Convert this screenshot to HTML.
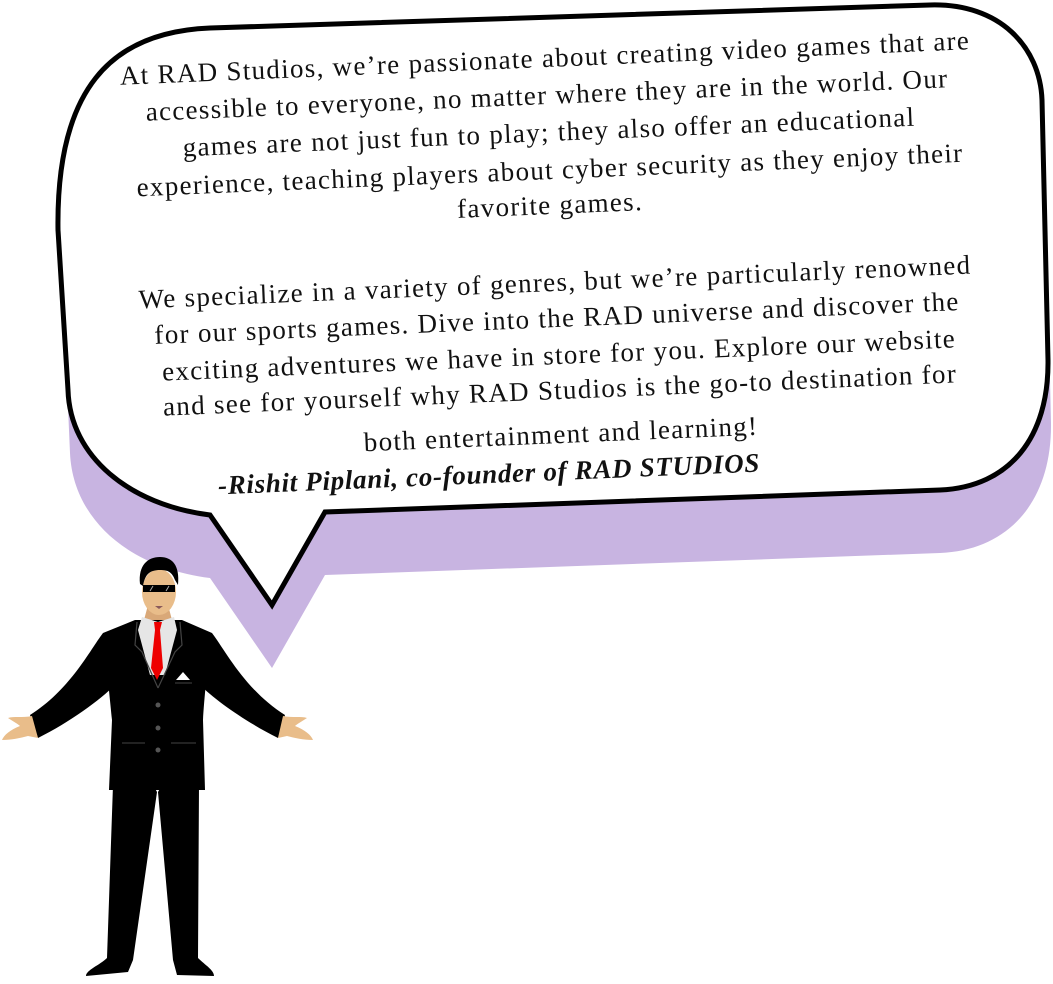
<!DOCTYPE html>
<html><head><meta charset="utf-8">
<style>
html,body{margin:0;padding:0;background:#fff;}
body{width:1053px;height:984px;position:relative;overflow:hidden;}
svg{position:absolute;left:0;top:0;}
.l{position:absolute;width:1000px;height:36px;line-height:36px;text-align:center;white-space:nowrap;
font-family:"Liberation Serif",serif;font-size:27px;color:#111;letter-spacing:1.3px;transform:rotate(-2.4deg);}
.s{font-weight:bold;font-style:italic;letter-spacing:0.7px;}
</style></head><body>
<svg width="1053" height="984" viewBox="0 0 1053 984">
  <path fill="#c8b4e1" d="M63 293 C60 150 110 95 210 91 L930 68 C1000 66 1043 110 1045 163 L1051 423 C1052 500 1010 550 940 553 L325 575 L272 668 L210 578 C130 568 73 520 70 453 Z"/>
  <path fill="#fff" stroke="#000" stroke-width="5" stroke-linejoin="miter" d="M58 230 C56 90 110 32 210 28 L930 5 C1000 3 1040 47 1042 100 L1048 360 C1049 437 1010 487 940 490 L325 512 L272 605 L210 515 C130 505 70 457 68 390 Z"/>
  <path fill="#000" d="M110 634 L103 633 C90 650 70 690 30 715 L38 738 C70 722 100 700 115 685 Z"/>
  <path fill="#000" d="M203 634 L212 633 C225 650 245 690 285 715 L278 738 C246 722 215 700 200 685 Z"/>
  <path fill="#e9bd8a" d="M32 716 C22 718 14 716 8 718 C14 722 18 724 20 726 C10 730 4 735 2 740 C12 740 20 738 28 736 L38 738 Z"/>
  <path fill="#e9bd8a" d="M283 716 C293 718 301 716 307 718 C301 722 297 724 295 726 C305 730 311 735 313 740 C303 740 295 738 287 736 L278 738 Z"/>
  <path fill="#000" d="M113 785 L153 785 L157 792 L133 960 L128 972 L86 976 C86 970 100 965 107 958 Z"/>
  <path fill="#000" d="M158 792 L162 785 L199 785 L198 958 C205 965 214 970 214 976 L177 975 L173 960 Z"/>
  <path fill="#000" d="M135 620 L182 620 L212 633 C208 660 204 700 203 720 L205 790 L109 790 L112 720 C110 700 106 660 103 633 Z"/>
  <path fill="#d9a878" d="M148 605 L168 605 L172 620 L144 620 Z"/>
  <path fill="#e6e6e6" d="M142 617 L158 622 L174 617 L177 630 L165 675 L150 675 L138 630 Z"/>
  <path fill="#e00" d="M154 622 L162 622 L160 630 L163 668 L157 680 L151 668 L155 630 Z"/>
  <path fill="none" stroke="#444" stroke-width="1.2" d="M137 622 L135 645 L142 652 L158 688 M180 622 L182 645 L175 652 L158 688"/>
  <path fill="#fff" d="M176 680 L183 672 L190 680 Z"/>
  <path stroke="#444" stroke-width="1" d="M175 683 L192 683 M122 743 L145 743 M171 743 L196 743"/>
  <circle cx="158" cy="705" r="2.5" fill="#555"/>
  <circle cx="158" cy="728" r="2.5" fill="#555"/>
  <circle cx="158" cy="750" r="2.5" fill="#555"/>
  <ellipse cx="159" cy="592" rx="17" ry="23" fill="#e9bd8a"/>
  <path fill="#000" d="M140 584 C138 565 148 557 160 557 C172 557 180 565 178 585 L175 580 C172 572 168 570 160 570 C150 570 145 574 143 586 Z"/>
  <rect x="143" y="585" width="32" height="7" fill="#000"/>
  <path stroke="#aaa" stroke-width="1" d="M150 591 L153 586 M166 591 L169 586"/>
  <path fill="#8a5a5a" d="M155 606 L163 606 L159 609 Z"/>
</svg>
<div class="l" style="left:45px;top:40px">At RAD Studios, we’re passionate about creating video games that are</div>
<div class="l" style="left:47px;top:77px">accessible to everyone, no matter where they are in the world. Our</div>
<div class="l" style="left:49px;top:114px">games are not just fun to play; they also offer an educational</div>
<div class="l" style="left:50px;top:152px">experience, teaching players about cyber security as they enjoy their</div>
<div class="l" style="left:50px;top:187px">favorite games.</div>
<div class="l" style="left:55px;top:264px">We specialize in a variety of genres, but we’re particularly renowned</div>
<div class="l" style="left:57px;top:300px">for our sports games. Dive into the RAD universe and discover the</div>
<div class="l" style="left:59px;top:337px">exciting adventures we have in store for you. Explore our website</div>
<div class="l" style="left:60px;top:372px">and see for yourself why RAD Studios is the go-to destination for</div>
<div class="l" style="left:61px;top:416px">both entertainment and learning!</div>
<div class="l s" style="left:-11px;top:456px">-Rishit Piplani, co-founder of RAD STUDIOS</div>
</body></html>
